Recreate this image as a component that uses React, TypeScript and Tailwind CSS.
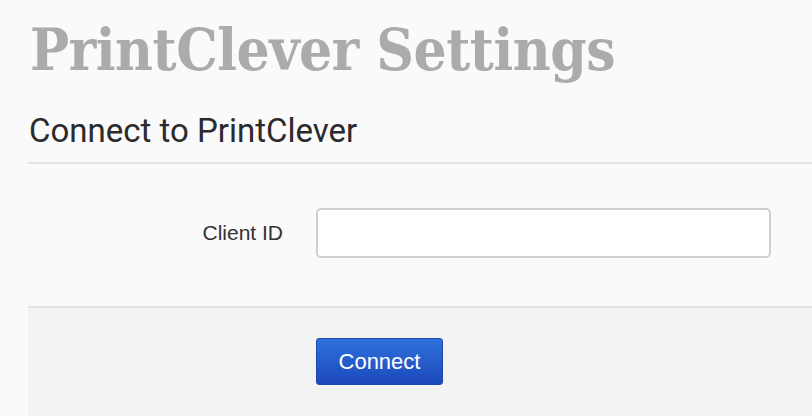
export default function App() {
  return (
    <div className="h-[416px] w-[812px] overflow-hidden bg-[#fafafa]">
      <div className="pl-[28px]">
        {/* page title */}
        <h1 className="pl-[2px] pt-[14px] font-['DejaVu_Serif',serif] text-[58px] font-bold font-stretch-condensed leading-[72px] tracking-[-0.5px] text-[#ababab]">
          PrintClever Settings
        </h1>

        {/* section heading */}
        <h2 className="mt-[25px] pl-[1px] font-['Roboto',sans-serif] text-[33px] leading-[40px] text-[#2b2b2b]">
          Connect to PrintClever
        </h2>
        <div className="mt-[11px] h-[2px] bg-[#e2e2e2]" />

        {/* form row */}
        <div className="flex items-center pt-[44px] pb-[48px]">
          <label className="w-[255px] text-right font-['Liberation_Sans',sans-serif] text-[21px] text-[#333]">
            Client ID
          </label>
          <input
            type="text"
            className="ml-[33px] h-[50px] w-[455px] rounded-[5px] border-2 border-[#cfcfcf] bg-white px-3 outline-none"
          />
        </div>

        {/* actions */}
        <div className="h-[2px] bg-[#e2e2e2]" />
        <div className="h-[200px] bg-[#f3f3f3] pl-[288px] pt-[30px]">
          <button className="h-[47px] w-[127px] rounded-[3px] border border-[#1b48b0] bg-gradient-to-b from-[#2f72dc] to-[#1d48bb] font-['Liberation_Sans',sans-serif] text-[22px] text-white">
            Connect
          </button>
        </div>
      </div>
    </div>
  );
}
